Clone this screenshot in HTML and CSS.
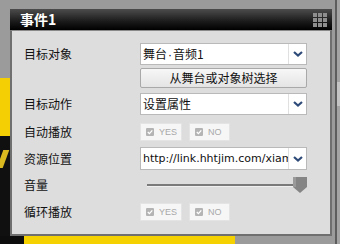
FILE: index.html
```html
<!DOCTYPE html>
<html lang="zh">
<head>
<meta charset="utf-8">
<link rel="stylesheet" href="styles.css">
</head>
<body>
<div class="backdrop">
  <div class="bd bd-yellow-left"></div>
  <div class="bd bd-black-left"></div>
  <div class="bd bd-a"></div>
  <div class="bd bd-black-bottom"></div>
  <div class="bd bd-yellow-bottom"></div>
  <div class="bd bd-right-line"></div>
  <div class="bd bd-right-strip"></div>
  <div class="bd bd-right-patch"></div>
</div>
<div class="panel">
  <div class="titlebar">
    <span class="title">事件1</span>
    <svg class="grip" width="15" height="14" viewBox="0 0 15 14">
      <g fill="#8e8e8e">
        <rect x="0" y="0" width="4" height="4"/><rect x="5" y="0" width="4" height="4"/><rect x="10" y="0" width="4" height="4"/>
        <rect x="0" y="5" width="4" height="4"/><rect x="5" y="5" width="4" height="4"/><rect x="10" y="5" width="4" height="4"/>
        <rect x="0" y="10" width="4" height="4"/><rect x="5" y="10" width="4" height="4"/><rect x="10" y="10" width="4" height="4"/>
      </g>
    </svg>
  </div>
  <div class="content">
    <div class="row r1">
      <span class="label">目标对象</span>
      <div class="select"><span class="val">舞台<span class="dot">·</span>音频1</span><span class="arrow"><svg width="10" height="6" viewBox="0 0 10 6"><path d="M1 1 L5 4.5 L9 1" fill="none" stroke="#2e4a78" stroke-width="2.2"/></svg></span></div>
    </div>
    <div class="row r2">
      <span class="label"></span>
      <div class="button">从舞台或对象树选择</div>
    </div>
    <div class="row r3">
      <span class="label">目标动作</span>
      <div class="select"><span class="val">设置属性</span><span class="arrow"><svg width="10" height="6" viewBox="0 0 10 6"><path d="M1 1 L5 4.5 L9 1" fill="none" stroke="#2e4a78" stroke-width="2.2"/></svg></span></div>
    </div>
    <div class="row r4">
      <span class="label">自动播放</span>
      <div class="checks">
        <div class="chk yes"><svg width="8" height="8" viewBox="0 0 8 8"><rect width="8" height="8" rx="1" fill="#b4b4b4"/><path d="M1.8 4 L3.4 5.6 L6.3 2.4" fill="none" stroke="#fff" stroke-width="1.3"/></svg><span>YES</span></div>
        <div class="chk no"><svg width="8" height="8" viewBox="0 0 8 8"><rect width="8" height="8" rx="1" fill="#b4b4b4"/><path d="M1.8 4 L3.4 5.6 L6.3 2.4" fill="none" stroke="#fff" stroke-width="1.3"/></svg><span>NO</span></div>
      </div>
    </div>
    <div class="row r5">
      <span class="label">资源位置</span>
      <div class="select"><span class="val url">http://link.hhtjim.com/xiami</span><span class="arrow"><svg width="10" height="6" viewBox="0 0 10 6"><path d="M1 1 L5 4.5 L9 1" fill="none" stroke="#2e4a78" stroke-width="2.2"/></svg></span></div>
    </div>
    <div class="row r6">
      <span class="label">音量</span>
      <svg class="slider" width="167" height="16" viewBox="0 0 167 16">
        <rect x="7" y="7" width="148" height="2" fill="#7a7a7a"/>
        <rect x="7" y="9" width="148" height="1" fill="#efefef"/>
        <path d="M153 0 H167 V10 L160 16 L153 10 Z" fill="#858585"/>
        <rect x="153" y="0" width="3" height="10" fill="#9a9a9a"/>
      </svg>
    </div>
    <div class="row r7">
      <span class="label">循环播放</span>
      <div class="checks">
        <div class="chk yes"><svg width="8" height="8" viewBox="0 0 8 8"><rect width="8" height="8" rx="1" fill="#b4b4b4"/><path d="M1.8 4 L3.4 5.6 L6.3 2.4" fill="none" stroke="#fff" stroke-width="1.3"/></svg><span>YES</span></div>
        <div class="chk no"><svg width="8" height="8" viewBox="0 0 8 8"><rect width="8" height="8" rx="1" fill="#b4b4b4"/><path d="M1.8 4 L3.4 5.6 L6.3 2.4" fill="none" stroke="#fff" stroke-width="1.3"/></svg><span>NO</span></div>
      </div>
    </div>
  </div>
</div>
</body>
</html>
```
FILE: styles.css
```css
* { box-sizing: border-box; }
html, body { margin: 0; padding: 0; }
body {
  width: 340px;
  height: 244px;
  overflow: hidden;
  background: #9b9b9b;
  font-family: "Noto Sans CJK SC", "Liberation Sans", sans-serif;
  position: relative;
}
.backdrop { position: absolute; inset: 0; z-index: 0; }
.bd { position: absolute; }
.bd-yellow-left { left: 0; top: 78px; width: 10px; height: 58px; background: #f3cf04; }
.bd-black-left { left: 0; top: 136px; width: 10px; height: 108px; background: #101010; }
.bd-a { left: 0; top: 150px; width: 6px; height: 18px; background: #d9b820; transform: skewX(-20deg); }
.bd-black-bottom { left: 0; top: 236px; width: 24px; height: 8px; background: #0d0d0d; }
.bd-yellow-bottom { left: 24px; top: 236px; width: 211px; height: 8px; background: #f5d100; }
.bd-right-line { left: 335px; top: 0; width: 2px; height: 244px; background: #5d5d5d; }
.bd-right-strip { left: 337px; top: 0; width: 3px; height: 244px; background: #a4a4a4; }
.bd-right-patch { left: 337px; top: 82px; width: 3px; height: 24px; background: #c4c4c4; }

.panel {
  position: relative;
  z-index: 1;
  margin: 9px 0 0 10px;
  width: 322px;
}
.titlebar {
  height: 21px;
  background: linear-gradient(#4c4c4c, #1a1a1a 60%, #000);
  display: flex;
  align-items: center;
  justify-content: space-between;
  padding: 0 4px 0 10px;
}
.title {
  color: #fff;
  font-weight: bold;
  font-size: 14px;
  line-height: 21px;
}
.grip { display: block; margin-top: 1px; }
.content {
  background: #dddddd;
  border: 2px solid #6f6f6f;
  border-top: 1px solid #8a8a8a;
  padding: 12px 0 13px 12px;
  display: flex;
  flex-direction: column;
}
.row { display: flex; align-items: center; }
.label {
  width: 116px;
  flex: none;
  font-size: 12px;
  color: #111;
  line-height: 14px;
}
.r1 { height: 22px; }
.r2 { height: 20px; margin-top: 3px; }
.r3 { height: 22px; margin-top: 5px; }
.r4 { height: 18px; margin-top: 8px; }
.r5 { height: 23px; margin-top: 6px; }
.r6 { height: 16px; margin-top: 7px; }
.r7 { height: 18px; margin-top: 10px; }
.select {
  width: 167px;
  height: 100%;
  background: #fff;
  border: 1px solid #b9b9b9;
  display: flex;
  align-items: center;
}
.val {
  flex: 1;
  min-width: 0;
  overflow: hidden;
  white-space: nowrap;
  padding-left: 2px;
  font-size: 12px;
  color: #111;
  line-height: 20px;
}
.dot { font-family: "Liberation Sans", sans-serif; padding: 0 1px; }
.url { font-family: "DejaVu Sans", "Liberation Sans", sans-serif; font-size: 11px; }
.arrow {
  width: 18px;
  height: 100%;
  flex: none;
  border-left: 1px solid #e0e0e0;
  display: flex;
  align-items: center;
  justify-content: center;
}
.arrow svg { display: block; }
.button {
  width: 167px;
  height: 100%;
  border: 1px solid #a9a9a9;
  border-radius: 2px;
  background: linear-gradient(#f7f7f7, #e4e4e4);
  font-size: 12px;
  color: #111;
  display: flex;
  align-items: center;
  justify-content: center;
  line-height: 14px;
}
.checks { display: flex; gap: 7px; height: 100%; }
.chk {
  height: 100%;
  background: #f6f6f6;
  border: 1px solid #e4e4e4;
  display: flex;
  align-items: center;
  gap: 5px;
  padding-left: 5px;
  font-family: "Liberation Sans", sans-serif;
  font-size: 9px;
  color: #a8a8a8;
}
.chk svg { display: block; flex: none; }
.chk.yes { width: 42px; }
.chk.no { width: 41px; }
.slider { display: block; }
```
